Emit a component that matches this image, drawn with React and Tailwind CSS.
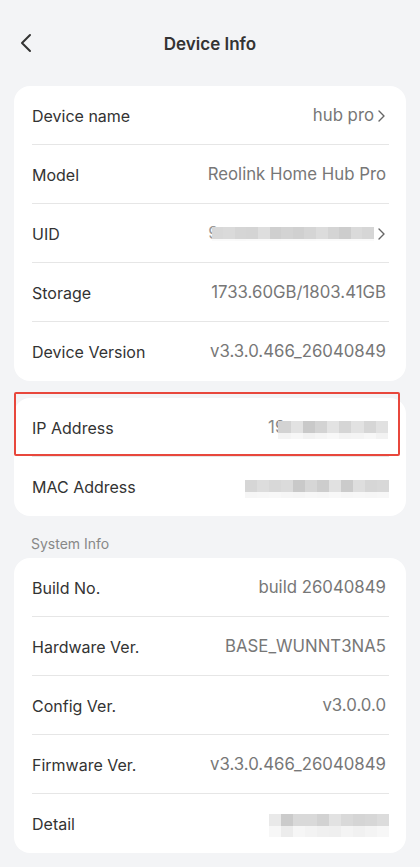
import React from 'react'

const FONT = { fontFamily: 'Inter, "Noto Sans", sans-serif' }

// pixelated blur placeholder: top row darker, bottom row faint
function Blur({ top, bottom, cell = 12, h1 = 12, h2 = 7 }) {
  return (
    <div className="relative flex flex-col">
      <div className="flex">
        {top.map((c, i) => (
          <div key={i} style={{ width: cell, height: h1, background: c }} />
        ))}
      </div>
      <div className="flex">
        {bottom.map((c, i) => (
          <div key={i} style={{ width: cell, height: h2, background: c }} />
        ))}
      </div>
    </div>
  )
}

function Chevron() {
  return (
    <svg width="9" height="14" viewBox="0 0 9 14" className="ml-[3px]">
      <path d="M2 2l5 5-5 5" fill="none" stroke="#666" strokeWidth="1.4" strokeLinecap="round" strokeLinejoin="round" />
    </svg>
  )
}

function Row({ label, value, last, arrow }) {
  return (
    <div className="relative flex h-[59px] items-center justify-between pl-[18px] pr-[20px]">
      <span className="text-[16px] text-[#333]">{label}</span>
      <div className="flex items-center text-[16.8px] text-[#777]">
        {value}
        {arrow && <Chevron />}
      </div>
      {!last && <div className="absolute bottom-0 left-[18px] right-[17px] h-px bg-[#e6e6e6]" />}
    </div>
  )
}

const f = ['#f4f4f4', '#f7f7f7', '#f2f2f2', '#f5f5f5', '#f8f8f8', '#f3f3f3']

export default function App() {
  return (
    <div className="min-h-[867px] w-[420px] bg-[#f3f4f6] pb-[14px]" style={FONT}>
      <div className="relative flex h-[86px] items-start justify-center pt-[32px]">
        <svg width="14" height="20" viewBox="0 0 14 20" className="absolute left-[19px] top-[33px]">
          <path d="M11 2L3 10l8 8" fill="none" stroke="#333" strokeWidth="2" strokeLinecap="round" strokeLinejoin="round" />
        </svg>
        <h1 className="text-[17px] font-semibold text-[#333]">Device Info</h1>
      </div>

      <div className="mx-[14px] overflow-hidden rounded-[16px] bg-white">
        <Row label="Device name" value="hub pro" arrow />
        <Row label="Model" value="Reolink Home Hub Pro" />
        <Row
          label="UID"
          arrow
          value={
            <div className="flex items-center">
              <span className="text-[#999]">9</span>
              <div className="-ml-[7px]">
                <Blur
                  top={['#d8d8d8', '#dadada', '#d5d5d5', '#d4d4d4', '#dedede', '#cfcfcf', '#d3d3d3', '#d0d0d0', '#d5d5d5', '#dcdcdc', '#d4d4d4', '#cdcdcd', '#dadada', '#d6d6d6']}
                  bottom={['#fafafa', '#fafafa', '#f9f9f9', '#fafafa', '#fafafa', '#f9f9f9', '#fafafa', '#fafafa', '#f9f9f9', '#fafafa', '#fafafa', '#fafafa', '#fafafa', '#fafafa']}
                  cell={11.6}
                  h1={12}
                  h2={2}
                />
              </div>
            </div>
          }
        />
        <Row label="Storage" value="1733.60GB/1803.41GB" />
        <Row label="Device Version" value="v3.3.0.466_26040849" last />
      </div>

      <div className="relative mx-[14px] mt-[17px] rounded-[16px] bg-white">
        <Row
          label="IP Address"
          value={
            <div className="-mr-[2px] flex items-center">
              <span className="text-[#888]">19</span>
              <div className="-ml-[7px] pt-[5px]">
                <Blur
                  top={['#d3d3d3', '#e2e2e2', '#c9c9c9', '#d3d3d3', '#e3e3e3', '#d5d5d5', '#e2e2e2', '#d6d6d6', '#e1e1e1']}
                  bottom={f.concat(f).slice(0, 9)}
                  cell={12.2}
                  h1={12}
                  h2={6}
                />
              </div>
            </div>
          }
        />
        <Row
          label="MAC Address"
          last
          value={
            <div className="-mr-[3px] pt-[5px]">
              <Blur
                top={['#d6d6d6', '#dddddd', '#d8d8d8', '#dbdbdb', '#c9c9c9', '#d6d6d6', '#cdcdcd', '#e1e1e1', '#cbcbcb', '#dedede', '#d6d6d6', '#d8d8d8']}
                bottom={['#f6f6f6', '#f7f7f7', '#f8f8f8', '#f6f6f6', '#f5f5f5', '#f7f7f7', '#f6f6f6', '#f8f8f8', '#f6f6f6', '#f7f7f7', '#f6f6f6', '#f7f7f7']}
                cell={12}
                h1={12}
                h2={6}
              />
            </div>
          }
        />
        <div className="pointer-events-none absolute left-0 top-[-6px] h-[64px] w-[386px] rounded-[2px] border-2 border-[#e8473c]" />
      </div>

      <div className="px-[31px] pb-[4px] pt-[17px] text-[14px] text-[#888]">System Info</div>

      <div className="mx-[14px] overflow-hidden rounded-[16px] bg-white">
        <Row label="Build No." value="build 26040849" />
        <Row label="Hardware Ver." value="BASE_WUNNT3NA5" />
        <Row label="Config Ver." value="v3.0.0.0" />
        <Row label="Firmware Ver." value="v3.3.0.466_26040849" />
        <Row
          label="Detail"
          last
          value={
            <div className="-mr-[3px] pt-[3px]">
              <Blur
                top={['#e9e9e9', '#cbcbcb', '#d9d9d9', '#d9d9d9', '#d2d2d2', '#e2e2e2', '#d9d9d9', '#d5d5d5', '#d7d7d7', '#dcdcdc']}
                bottom={['#f7f7f7', '#ececec', '#f6f6f6', '#f3f3f3', '#f0f0f0', '#efefef', '#f4f4f4', '#f1f1f1', '#f4f4f4', '#f7f7f7']}
                cell={12}
                h1={12}
                h2={11}
              />
            </div>
          }
        />
      </div>
    </div>
  )
}
